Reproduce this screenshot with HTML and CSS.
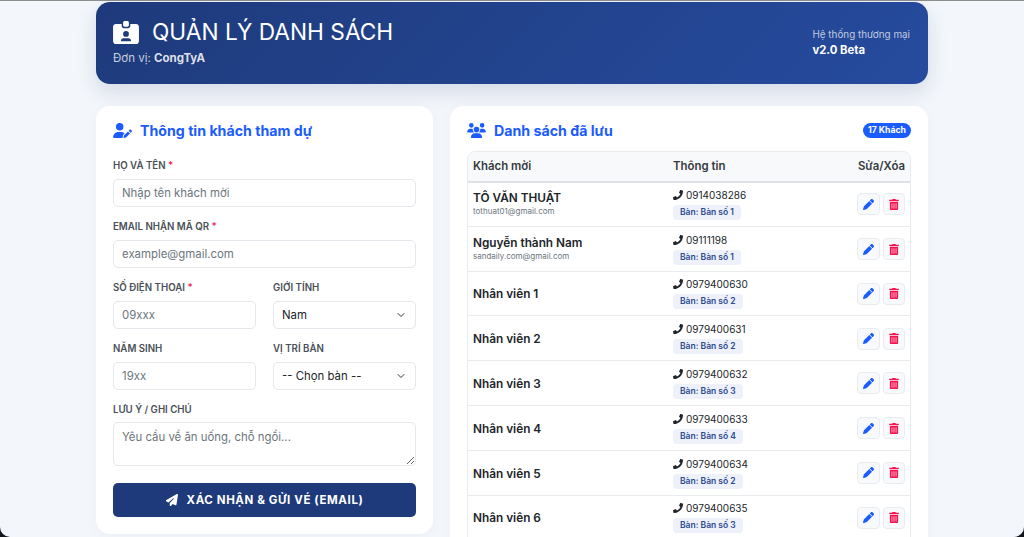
FILE: index.html
```html
<!doctype html>
<html lang="vi">

<head>
    <meta charset="utf-8">
    <title>Quản lý danh sách</title>
    <link rel="stylesheet" href="styles.css">
</head>

<body>
    <svg class="sprite">
        <symbol id="i-badge" viewBox="0 0 576 512"><path d="M256 0h64c17.7 0 32 14.3 32 32V96c0 17.7-14.3 32-32 32H256c-17.7 0-32-14.3-32-32V32c0-17.7 14.3-32 32-32zM64 64H192v48c0 26.5 21.5 48 48 48h96c26.5 0 48-21.5 48-48V64H512c35.3 0 64 28.7 64 64V448c0 35.3-28.7 64-64 64H64c-35.3 0-64-28.7-64-64V128C0 92.7 28.7 64 64 64zM176 437.3c0 5.9 4.8 10.7 10.7 10.7H389.3c5.9 0 10.7-4.8 10.7-10.7c0-29.5-23.9-53.3-53.3-53.3H229.3c-29.5 0-53.3 23.9-53.3 53.3zM288 352a64 64 0 1 0 0-128 64 64 0 1 0 0 128z"/></symbol>
        <symbol id="i-user-pen" viewBox="0 0 640 512"><path d="M224 256A128 128 0 1 0 224 0a128 128 0 1 0 0 256zm-45.7 48C79.8 304 0 383.8 0 482.3C0 498.7 13.3 512 29.7 512H322.8c-3.1-8.8-3.7-18.4-1.4-27.8l15-60.1c2.8-11.3 8.6-21.5 16.8-29.7l40.3-40.3c-32.1-31-75.7-50.1-123.9-50.1H178.3zm435.5-68.3c-15.6-15.6-40.9-15.6-56.6 0l-29.4 29.4 71 71 29.4-29.4c15.6-15.6 15.6-40.9 0-56.6l-14.4-14.4zM375.9 417c-4.1 4.1-7 9.2-8.4 14.9l-15 60.1c-1.4 5.5 .2 11.2 4.2 15.2s9.7 5.6 15.2 4.2l60.1-15c5.6-1.4 10.8-4.3 14.9-8.4L576.1 358.7l-71-71L375.9 417z"/></symbol>
        <symbol id="i-users" viewBox="0 0 640 512"><path d="M144 0a80 80 0 1 1 0 160A80 80 0 1 1 144 0zM512 0a80 80 0 1 1 0 160A80 80 0 1 1 512 0zM0 298.7C0 239.8 47.8 192 106.7 192h42.7c15.9 0 31 3.5 44.6 9.7c-1.3 7.2-1.9 14.7-1.9 22.3c0 38.2 16.8 72.5 43.3 96c-.2 0-.4 0-.7 0H21.3C9.6 320 0 310.4 0 298.7zM405.3 320c-.2 0-.4 0-.7 0c26.6-23.5 43.3-57.8 43.3-96c0-7.6-.7-15-1.9-22.3c13.6-6.3 28.7-9.7 44.6-9.7h42.7C592.2 192 640 239.8 640 298.7c0 11.8-9.6 21.3-21.3 21.3H405.3zM224 224a96 96 0 1 1 192 0 96 96 0 1 1 -192 0zM128 485.3C128 411.7 187.7 352 261.3 352H378.7C452.3 352 512 411.7 512 485.3c0 14.7-11.9 26.7-26.7 26.7H154.7c-14.7 0-26.7-11.9-26.7-26.7z"/></symbol>
        <symbol id="i-plane" viewBox="0 0 512 512"><path d="M498.1 5.6c10.1 7 15.4 19.1 13.5 31.2l-64 416c-1.5 9.7-7.4 18.2-16 23s-18.9 5.4-28 1.6L284 427.7l-68.5 74.1c-8.9 9.7-22.9 12.9-35.2 8.1S160 493.2 160 480V396.4c0-4 1.5-7.8 4.2-10.7L331.8 202.8c5.8-6.3 5.6-16-.4-22s-15.7-6.4-22-.7L106 360.8 17.7 316.6C7.1 311.3 .3 300.7 0 288.9s5.9-22.8 16.1-28.7l448-256c10.7-6.1 23.9-5.5 34 1.4z"/></symbol>
        <symbol id="i-phone" viewBox="0 0 512 512"><path d="M493.4 24.6l-104-24c-11.3-2.6-22.9 3.3-27.5 13.9l-48 112c-4.2 9.8-1.4 21.3 6.9 28l60.6 49.6c-36 76.7-98.9 140.5-177.2 177.2l-49.6-60.6c-6.8-8.3-18.2-11.1-28-6.9l-112 48C3.9 366.5-2 378.1.6 389.4l24 104C27.1 504.2 36.7 512 48 512c256.1 0 464-207.5 464-464 0-11.2-7.7-20.9-18.6-23.4z"/></symbol>
        <symbol id="i-pen" viewBox="0 0 512 512"><path d="M362.7 19.3L314.3 67.7 444.3 197.7l48.4-48.4c25-25 25-65.5 0-90.5L453.3 19.3c-25-25-65.5-25-90.5 0zm-71 71L58.6 323.5c-10.4 10.4-18 23.3-22.2 37.4L1 481.2C-1.5 489.7 .8 498.8 7 505s15.3 8.5 23.7 6.1l120.3-35.4c14.1-4.2 27-11.8 37.4-22.2L421.7 220.3 291.7 90.3z"/></symbol>
        <symbol id="i-trash" viewBox="0 0 448 512"><path d="M32 464a48 48 0 0 0 48 48h288a48 48 0 0 0 48-48V128H32zm272-256a16 16 0 0 1 32 0v224a16 16 0 0 1-32 0zm-96 0a16 16 0 0 1 32 0v224a16 16 0 0 1-32 0zm-96 0a16 16 0 0 1 32 0v224a16 16 0 0 1-32 0zM432 32H312l-9.4-18.7A24 24 0 0 0 281.1 0H166.8a23.72 23.72 0 0 0-21.4 13.3L136 32H16A16 16 0 0 0 0 48v32a16 16 0 0 0 16 16h416a16 16 0 0 0 16-16V48a16 16 0 0 0-16-16z"/></symbol>
    </svg>

    <div class="wrap">
        <!-- Header -->
        <header class="hero">
            <div>
                <h1 class="hero-title"><svg class="hero-icon"><use href="#i-badge"/></svg>QUẢN LÝ DANH SÁCH</h1>
                <p class="hero-sub">Đơn vị: <b>CongTyA</b></p>
            </div>
            <div class="hero-side">
                <div class="hero-side-label">Hệ thống thương mại</div>
                <div class="hero-side-ver">v2.0 Beta</div>
            </div>
        </header>

        <div class="columns">
            <!-- Form -->
            <section class="card card-form">
                <h2 class="card-title"><svg class="title-icon"><use href="#i-user-pen"/></svg>Thông tin khách tham dự</h2>
                <form>
                    <div class="field">
                        <label class="label">Họ và tên <span class="req">*</span></label>
                        <input class="control" placeholder="Nhập tên khách mời">
                    </div>
                    <div class="field">
                        <label class="label">Email nhận mã QR <span class="req">*</span></label>
                        <input class="control" placeholder="example@gmail.com">
                    </div>
                    <div class="field-row">
                        <div class="field">
                            <label class="label">Số điện thoại <span class="req">*</span></label>
                            <input class="control" placeholder="09xxx">
                        </div>
                        <div class="field">
                            <label class="label">Giới tính</label>
                            <select class="control select"><option>Nam</option><option>Nữ</option></select>
                        </div>
                    </div>
                    <div class="field-row">
                        <div class="field">
                            <label class="label">Năm sinh</label>
                            <input class="control" placeholder="19xx">
                        </div>
                        <div class="field">
                            <label class="label">Vị trí bàn</label>
                            <select class="control select"><option>-- Chọn bàn --</option></select>
                        </div>
                    </div>
                    <div class="field">
                        <label class="label label-note">Lưu ý / Ghi chú</label>
                        <textarea class="control note" placeholder="Yêu cầu về ăn uống, chỗ ngồi..."></textarea>
                    </div>
                    <button type="button" class="submit"><svg class="submit-icon"><use href="#i-plane"/></svg>XÁC NHẬN &amp; GỬI VÉ (EMAIL)</button>
                </form>
            </section>

            <!-- Guest list -->
            <section class="card card-list">
                <div class="list-head">
                    <h2 class="card-title"><svg class="title-icon"><use href="#i-users"/></svg>Danh sách đã lưu</h2>
                    <span class="count">17 Khách</span>
                </div>
                <div class="table-box">
                    <table class="guests">
                        <thead>
                            <tr><th class="col-name">Khách mời</th><th class="col-info">Thông tin</th><th class="col-act">Sửa/Xóa</th></tr>
                        </thead>
                        <tbody id="guestRows"></tbody>
                    </table>
                </div>
            </section>
        </div>
    </div>

    <script>
        const guests = [
            ['TÔ VĂN THUẬT', 'tothuat01@gmail.com', '0914038286', 'Bàn số 1'],
            ['Nguyễn thành Nam', 'sandaily.com@gmail.com', '09111198', 'Bàn số 1'],
            ['Nhân viên 1', '', '0979400630', 'Bàn số 2'],
            ['Nhân viên 2', '', '0979400631', 'Bàn số 2'],
            ['Nhân viên 3', '', '0979400632', 'Bàn số 3'],
            ['Nhân viên 4', '', '0979400633', 'Bàn số 4'],
            ['Nhân viên 5', '', '0979400634', 'Bàn số 2'],
            ['Nhân viên 6', '', '0979400635', 'Bàn số 3']
        ];

        document.getElementById('guestRows').innerHTML = guests.map(function (g) {
            return '<tr>' +
                '<td><div class="guest-name">' + g[0] + '</div>' + (g[1] ? '<div class="guest-mail">' + g[1] + '</div>' : '') + '</td>' +
                '<td><div class="guest-phone"><svg class="phone-icon"><use href="#i-phone"/></svg>' + g[2] + '</div><div class="table-tag">Bàn: ' + g[3] + '</div></td>' +
                '<td class="col-act"><button class="act act-edit"><svg class="act-pen"><use href="#i-pen"/></svg></button><button class="act"><svg class="act-trash"><use href="#i-trash"/></svg></button></td>' +
                '</tr>';
        }).join('');
    </script>
</body>

</html>
```

FILE: styles.css
```css
* {
    box-sizing: border-box;
}

html {
    height: 537px;
    overflow: hidden;
    background: #14141c;
}

body {
    height: 537px;
    margin: 0;
    overflow: hidden;
    border-top: 1px solid #8c8c8c;
    border-radius: 0 0 10px 10px;
    background: #f3f6fa;
    color: #212529;
    font-family: Inter, "Noto Sans", sans-serif;
}

.sprite {
    display: none;
}

svg {
    fill: currentColor;
}

.wrap {
    width: 832px;
    margin: 0 auto;
    padding-top: 1px;
}

/* Header */
.hero {
    display: flex;
    justify-content: space-between;
    align-items: center;
    height: 82px;
    padding: 0 18px 4px 17px;
    border-radius: 14px;
    background: linear-gradient(135deg, #1e3a7b, #264b9e);
    color: #fff;
    box-shadow: 0 8px 20px rgba(30, 58, 123, 0.14);
}

.hero-title {
    display: flex;
    align-items: center;
    margin: 0;
    font-size: 22.7px;
    font-weight: 400;
    line-height: 32px;
}

.hero-icon {
    width: 26px;
    height: 23px;
    margin-right: 13px;
}

.hero-sub {
    margin: 1.5px 0 0;
    font-size: 11.5px;
    line-height: 16px;
    color: rgba(255, 255, 255, 0.75);
}

.hero-sub b {
    font-weight: 700;
    color: rgba(255, 255, 255, 0.85);
}

.hero-side {
    margin-top: 2px;
    font-size: 9.9px;
    white-space: nowrap;
}

.hero-side-label {
    color: rgba(255, 255, 255, 0.72);
    line-height: 16px;
}

.hero-side-ver {
    font-size: 11.3px;
    font-weight: 700;
    line-height: 16px;
}

/* Columns */
.columns {
    display: grid;
    grid-template-columns: 337px 478px;
    gap: 17px;
    margin-top: 22px;
}

.card {
    padding: 16px 17px 17px;
    border-radius: 14px;
    background: #fff;
    box-shadow: 0 2px 12px rgba(0, 0, 0, 0.03);
}

.card-form {
    height: 428px;
}

.card-title {
    display: flex;
    align-items: center;
    margin: 0;
    font-size: 14.2px;
    font-weight: 700;
    line-height: 17px;
    color: #1a5cff;
}

.title-icon {
    width: 19px;
    height: 15px;
    margin-right: 8px;
}

/* Form */
form {
    margin-top: 20px;
}

.field {
    margin-bottom: 13.5px;
}

.field-row {
    display: grid;
    grid-template-columns: 1fr 1fr;
    gap: 17px;
}

.label {
    display: block;
    margin-bottom: 7px;
    font-size: 9.7px;
    font-weight: 600;
    line-height: 13px;
    text-transform: uppercase;
    color: #495057;
}

.label-note {
    margin-bottom: 6px;
}

.req {
    color: #f5124f;
}

.control {
    display: block;
    width: 100%;
    height: 27.5px;
    padding: 0 8px;
    border: 1px solid #e3e6ea;
    border-radius: 5px;
    background: #fff;
    color: #212529;
    font-family: inherit;
    font-size: 11.4px;
}

.control::placeholder {
    color: #6c757d;
    opacity: 1;
}

.select {
    appearance: none;
    background-image: url("data:image/svg+xml,%3csvg xmlns='http://www.w3.org/2000/svg' viewBox='0 0 16 16'%3e%3cpath fill='none' stroke='%23343a40' stroke-linecap='round' stroke-linejoin='round' stroke-width='2' d='m2 5 6 6 6-6'/%3e%3c/svg%3e");
    background-repeat: no-repeat;
    background-position: right 9px center;
    background-size: 10px 8px;
}

.note {
    height: 44px;
    padding: 7px 8px;
    line-height: 1.4;
}

.submit {
    display: flex;
    justify-content: center;
    align-items: center;
    width: 100%;
    height: 34px;
    margin-top: 16.5px;
    border: 0;
    border-radius: 5px;
    background: #1e3a7b;
    color: #fff;
    font-family: inherit;
    font-size: 11.5px;
    font-weight: 700;
    letter-spacing: 0.6px;
}

.submit-icon {
    width: 12px;
    height: 12px;
    margin-right: 9px;
}

/* Guest list */
.list-head {
    display: flex;
    justify-content: space-between;
    align-items: center;
    margin-bottom: 12px;
}

.count {
    padding: 2px 5px;
    border-radius: 8px;
    background: #1a5cff;
    color: #fff;
    font-size: 8.7px;
    font-weight: 700;
    line-height: 11px;
}

.table-box {
    border: 1px solid #e9ecef;
    border-radius: 8px 8px 0 0;
    overflow: hidden;
}

.guests {
    width: 100%;
    border-collapse: collapse;
    table-layout: fixed;
}

.guests th {
    height: 29.5px;
    padding: 0 5px;
    border-bottom: 2px solid #dee2e6;
    background: #f8f9fa;
    font-size: 11.4px;
    font-weight: 600;
    text-align: left;
    color: #343a40;
}

.guests td {
    height: 44.8px;
    padding: 0 5px;
    border-bottom: 1px solid #e9ecef;
    vertical-align: middle;
}

.col-name {
    width: 200px;
}

.guests .col-act {
    width: 90px;
    text-align: right;
}

.guest-name {
    font-size: 11.8px;
    font-weight: 600;
    line-height: 14px;
}

.guest-name:only-child {
    padding-top: 2px;
}

.guest-mail {
    font-size: 8px;
    line-height: 12px;
    color: #6c757d;
}

.guest-phone {
    display: flex;
    align-items: center;
    font-size: 10px;
    line-height: 14px;
}

.phone-icon {
    width: 10px;
    height: 10px;
    margin-right: 3px;
}

.table-tag {
    width: fit-content;
    margin-top: 3px;
    padding: 1px 7px;
    border-radius: 4px;
    background: #eef1f9;
    color: #2b4a8f;
    font-size: 8.5px;
    font-weight: 600;
    line-height: 13px;
}

.act {
    display: inline-flex;
    justify-content: center;
    align-items: center;
    width: 22px;
    height: 22px;
    margin-left: 3px;
    padding: 0;
    border: 1px solid #e9ecef;
    border-radius: 4px;
    background: #f8f9fa;
    vertical-align: middle;
}

.act-edit {
    width: 23px;
}

.act-pen {
    width: 11px;
    height: 11px;
    color: #1a5cff;
}

.act-trash {
    width: 10px;
    height: 11px;
    color: #f5124f;
}
```
